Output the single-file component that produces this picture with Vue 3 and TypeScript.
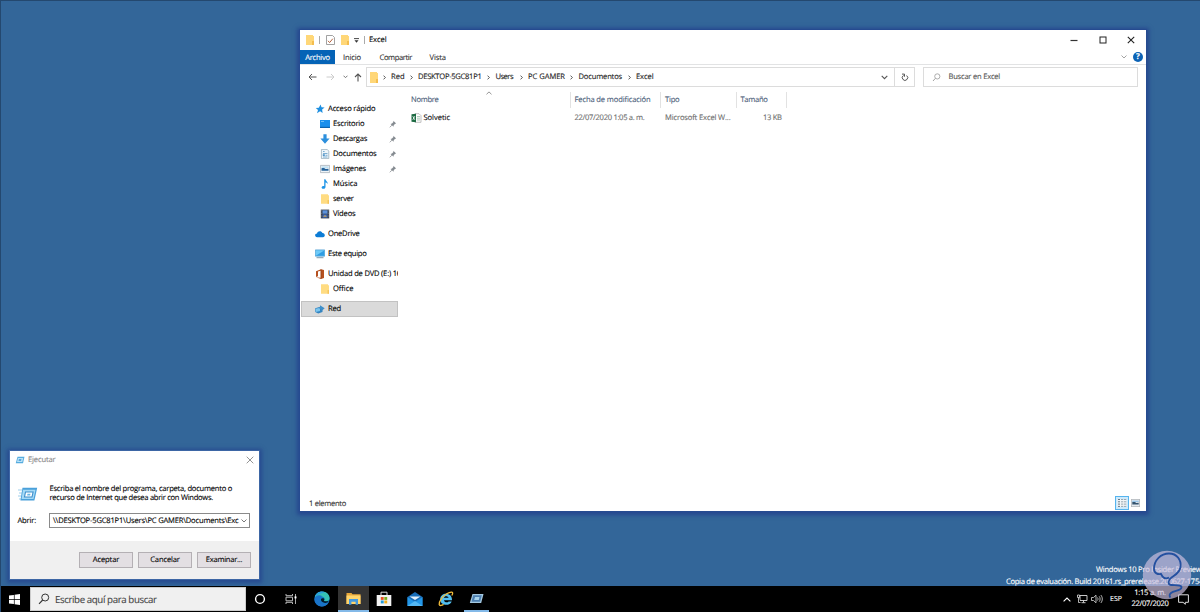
<script setup lang="ts">
import type { Directive } from 'vue'

interface NavItem {
  label: string
  icon: string
  width: number
  child?: boolean
  pinned?: boolean
  gap?: boolean
  selected?: boolean
}

/* Spaces the letters of a label so that it occupies the given width. */
const vFit: Directive<HTMLElement, number> = {
  mounted(el, binding) {
    const n = (el.textContent ?? '').length
    const w = el.getBoundingClientRect().width
    if (n > 0) el.style.letterSpacing = `${(binding.value - w) / n}px`
  },
}

const nav: NavItem[] = [
  { label: 'Acceso rápido', icon: 'star', width: 47.5 },
  { label: 'Escritorio', icon: 'desktop', width: 31.5, child: true, pinned: true },
  { label: 'Descargas', icon: 'down', width: 34, child: true, pinned: true },
  { label: 'Documentos', icon: 'doc', width: 43.5, child: true, pinned: true },
  { label: 'Imágenes', icon: 'image', width: 33, child: true, pinned: true },
  { label: 'Música', icon: 'music', width: 24.5, child: true },
  { label: 'server', icon: 'folder', width: 20.5, child: true },
  { label: 'Vídeos', icon: 'video', width: 22.5, child: true },
  { label: 'OneDrive', icon: 'cloud', width: 31.5, gap: true },
  { label: 'Este equipo', icon: 'pc', width: 38.5, gap: true },
  { label: 'Unidad de DVD (E:) 16', icon: 'office', width: 73, gap: true },
  { label: 'Office', icon: 'folder', width: 20.5, child: true },
  { label: 'Red', icon: 'net', width: 13, gap: true, selected: true },
]

const crumbs = [
  { label: 'Red', width: 13.5, box: 24 },
  { label: 'DESKTOP-5GC81P1', width: 63.5, box: 74.5 },
  { label: 'Users', width: 17.5, box: 29.5 },
  { label: 'PC GAMER', width: 37, box: 47.5 },
  { label: 'Documentos', width: 43.5, box: 54.5 },
  { label: 'Excel', width: 17.5, box: 24 },
]
</script>

<template>
  <div class="desktop">
    <section class="explorer">
      <header class="titlebar">
        <svg class="t-folder" viewBox="0 0 10 10"><path d="M1 0h7v1h1v9H1z" fill="#ffd778" /><path d="M7 6h2v4H7z" fill="#f4bd4f" /></svg>
        <i class="t-sep" />
        <svg class="t-check" viewBox="0 0 9 10"><path d="M.5.5h6l2 2v7h-8z" fill="#fff" stroke="#8a8a8a" stroke-width=".8" /><path d="M2 5.8l1.6 1.8L6.8 3.7" fill="none" stroke="#b5643f" stroke-width="1" /></svg>
        <svg class="t-folder2" viewBox="0 0 10 10"><path d="M1 0h7v1h1v9H1z" fill="#ffd778" /><path d="M7 6h2v4H7z" fill="#f4bd4f" /></svg>
        <svg class="t-drop" viewBox="0 0 5 5"><path d="M0 .6h5" stroke="#333" stroke-width=".9" /><path d="M.5 2.3h4L2.5 4.7z" fill="#333" /></svg>
        <i class="t-sep second" />
        <span v-fit="17.5" class="title">Excel</span>
        <div class="controls">
          <svg width="8" height="10" viewBox="0 0 8 10"><path d="M.5 5.5h7" stroke="#333" stroke-width="1.2" /></svg>
          <svg width="8" height="10" viewBox="0 0 8 10"><rect x="1" y="2" width="6" height="6" fill="none" stroke="#222" /></svg>
          <svg width="8" height="10" viewBox="0 0 8 10"><path d="M.8 1.8l6.4 6.4M7.2 1.8L.8 8.2" stroke="#222" stroke-width="1.1" /></svg>
        </div>
      </header>

      <nav class="ribbon">
        <div class="tab file"><span v-fit="24.5">Archivo</span></div>
        <div class="tab inicio"><span v-fit="18">Inicio</span></div>
        <div class="tab compartir"><span v-fit="32.5">Compartir</span></div>
        <div class="tab vista"><span v-fit="16.5">Vista</span></div>
        <div class="ribbon-right">
          <svg width="6" height="4" viewBox="0 0 6 4"><path d="M.5.5L3 3 5.5.5" fill="none" stroke="#999" stroke-width=".9" /></svg>
          <span class="help">?</span>
        </div>
      </nav>

      <div class="toolbar">
        <div class="arrows">
          <svg class="a-back" viewBox="0 0 9 8"><path d="M8.5 4H1M4 1L1 4l3 3" fill="none" stroke="#555" /></svg>
          <svg class="a-fwd" viewBox="0 0 9 8"><path d="M.5 4H8M5 1l3 3-3 3" fill="none" stroke="#ccc" /></svg>
          <svg class="a-drop" viewBox="0 0 5 4"><path d="M.5.7l2 2 2-2" fill="none" stroke="#777" /></svg>
          <svg class="a-up" viewBox="0 0 8 9"><path d="M4 8.5V1M1 4l3-3 3 3" fill="none" stroke="#555" stroke-width="1.1" /></svg>
        </div>
        <div class="address">
          <svg class="addr-folder" viewBox="0 0 10 11"><path d="M1 0h7v1h1v10H1z" fill="#ffd778" /><path d="M7 7h2v4H7z" fill="#f4bd4f" /></svg>
          <div v-for="c in crumbs" :key="c.label" class="crumb">
            <svg class="chev" viewBox="0 0 3 5"><path d="M.5.6l1.9 1.9L.5 4.4" fill="none" stroke="#444" stroke-width=".9" /></svg>
            <div class="crumb-box" :style="{ width: c.box + 'px' }"><span v-fit="c.width">{{ c.label }}</span></div>
          </div>
          <svg class="addr-drop" viewBox="0 0 7 5"><path d="M.7.9l2.8 2.8L6.3.9" fill="none" stroke="#555" stroke-width="1.1" /></svg>
          <div class="refresh">
            <svg width="8" height="9" viewBox="0 0 8 9"><path d="M5.6 2.5A2.7 2.7 0 1 1 2.5 2.4M1 1.1h2.5v2.6" fill="none" stroke="#555" stroke-width="1" /></svg>
          </div>
        </div>
        <div class="search">
          <svg width="9" height="9" viewBox="0 0 9 9"><circle cx="5.3" cy="3.4" r="2.6" fill="none" stroke="#999" stroke-width=".8" /><path d="M3.4 5.3L1 8" stroke="#999" stroke-width=".9" /></svg>
          <span v-fit="51.5">Buscar en Excel</span>
        </div>
      </div>

      <div class="body">
        <aside class="sidebar">
          <div v-for="item in nav" :key="item.label" class="nav-row" :class="{ child: item.child, gap: item.gap, selected: item.selected }">
            <svg class="nav-icon" viewBox="0 0 10 10">
              <path v-if="item.icon === 'star'" d="M5.6.6l.9 2.700 3.100.2-2.500 2 .5 3.400-2.500-1.600L2 9.200l1-3.300L.8 4l3-.3z" fill="#1e8fe0" />
              <g v-else-if="item.icon === 'desktop'"><path d="M0 1h10v8H0z" fill="#1a8fec" /><path d="M0 7.8h10V9H0z" fill="#0b64b0" /><path d="M1 2h3v1H1z" fill="#70c0f8" /></g>
              <path v-else-if="item.icon === 'down'" d="M3.4.3h3.2v4.3h3L5 9.7.4 4.6h3z" fill="#2c8fdd" />
              <g v-else-if="item.icon === 'doc'"><path d="M1.4.4h5.8l1.6 1.7v7.5H1.4z" fill="#edf5fa" stroke="#8ca5b4" stroke-width=".7" /><path d="M3 2.5h1.6M3 4.5h4.5M5.5 6.3h2M3 8h4.5" stroke="#5e9cc8" stroke-width=".8" /><path d="M2.8 5.3h2v1.6h-2z" fill="#3e88c2" /></g>
              <g v-else-if="item.icon === 'image'"><path d="M.4 1.4h9.2v7.2H.4z" fill="#eef4f8" stroke="#9fa9b1" stroke-width=".7" /><path d="M1.5 4.200l2.200-.4 2 1.300 2.800-.3v1.900h-7z" fill="#26639a" /><path d="M1.5 2.5h7v1.3h-7z" fill="#b4dcf3" /></g>
              <path v-else-if="item.icon === 'music'" d="M4.2.2h1.2c.2 1.8 2.7 2.2 2.3 4.9-.5-1.2-1.4-1.5-2.2-1.6v4.4c0 2.3-3.9 2.5-3.9.6 0-1.4 1.5-1.8 2.6-1.5z" fill="#2196e8" />
              <g v-else-if="item.icon === 'folder'"><path d="M1 .3h7v1h1v8.4H1z" fill="#ffdc82" /><path d="M7.5 6H9v3.7H7.5z" fill="#f5c55d" /></g>
              <g v-else-if="item.icon === 'video'"><path d="M.8.6h8.4v8.8H.8z" fill="#333c4b" /><path d="M2.5 1.3h5v3.4h-5z" fill="#5b91dc" /><path d="M2.5 5.3h5v3.4h-5z" fill="#3b66b7" /><path d="M3 7.7l2-1.7 2 1.7z" fill="#c9a45a" /><path d="M1.7 1v8.4M8.3 1v8.4" stroke="#b9bcc4" stroke-width=".5" stroke-dasharray=".8 .8" /></g>
              <path v-else-if="item.icon === 'cloud'" d="M2.1 8.2C-.6 8-.4 4.6 2 4.6 2.6 1.5 6.5 1.4 7.4 4c2.8-.2 3.3 4 .6 4.2z" fill="#0c7cd5" />
              <g v-else-if="item.icon === 'pc'"><path d="M.3.9h9.4v6.3H.3z" fill="#6dcaf8" stroke="#3d8fc7" stroke-width=".6" /><path d="M.8 6.7L9.2 1.4v5.3z" fill="#2f9de3" /><path d="M1.5 8.2h7v1h-7z" fill="#7c98aa" /></g>
              <g v-else-if="item.icon === 'office'"><path d="M1 2.200L6 .2 9 1v8L6 9.900 1 8.200l4.700.5V1.800l-2.700.8v4.600L1 8z" fill="#b5501f" /><path d="M6 .3v9.500" stroke="#7d3413" stroke-width=".5" /></g>
              <g v-else><path d="M.2 4.300l5-1.500 2.300 1v4.200L3.200 9.500.2 8z" fill="#3484c0" /><path d="M.7 4.700l4.300-1v3.400l-4.300 1z" fill="#79c5ef" /><path d="M5 1.300l4.700 3L6.500 7V5.500L3.500 4l1.500-.7z" fill="#3f8fc9" /></g>
            </svg>
            <span v-fit="item.width" class="nav-label">{{ item.label }}</span>
            <svg v-if="item.pinned" class="pin" viewBox="0 0 8 8"><path d="M4.3.8l2.9 2.8-1 .2-1.5 1.5-.1 1.5L1.5 3.9 3 3.6 4.4 2z" fill="#858b91" /><path d="M3 5.1L.8 7.3" stroke="#858b91" stroke-width=".8" /></svg>
          </div>
        </aside>
        <main class="files">
          <div class="head">
            <div class="col name"><span v-fit="27.5">Nombre</span>
              <svg class="sort" viewBox="0 0 6 4"><path d="M.5 3.3L3 .9l2.5 2.4" fill="none" stroke="#777" stroke-width=".8" /></svg>
            </div>
            <div class="col date"><span v-fit="76">Fecha de modificación</span></div>
            <div class="col type"><span v-fit="14.5">Tipo</span></div>
            <div class="col size"><span v-fit="27">Tamaño</span></div>
          </div>
          <div class="file-row">
            <div class="cell name">
              <svg width="11" height="10" viewBox="0 0 11 10"><path d="M4 .7h4l2 2v6.600H4z" fill="#fff" stroke="#999" stroke-width=".6" /><path d="M6 3.500h3M6 5.200h3M6 7h3" stroke="#8fb8a0" stroke-width=".7" /><path d="M.5 1.300L5 .7v8.600l-4.500-.6z" fill="#1d6b43" /><path d="M1.800 3.200l2 3.600M3.800 3.200l-2 3.600" stroke="#fff" stroke-width=".8" /></svg>
              <span v-fit="26.5">Solvetic</span>
            </div>
            <div class="cell date"><span v-fit="70">22/07/2020 1:05 a. m.</span></div>
            <div class="cell type"><span v-fit="65.5">Microsoft Excel W...</span></div>
            <div class="cell size"><span v-fit="18.5">13 KB</span></div>
          </div>
        </main>
      </div>

      <footer class="status">
        <span v-fit="37">1 elemento</span>
        <div class="views">
          <svg width="14" height="14" viewBox="0 0 14 14"><rect x=".5" y=".5" width="13" height="13" fill="#cdeafc" stroke="#56b4ee" /><path d="M2.500 3h9v8h-9z" fill="#f2f5f7" /><path d="M3 3.500h2M3 5.800h2M3 8.100h2M3 10.400h2" stroke="#687987" stroke-width="1" /><path d="M6 3.500h2.300M6 5.800h2.300M6 8.100h2.300M6 10.400h2.300M9 3.500h2.300M9 5.800h2.300M9 8.100h2.300M9 10.400h2.300" stroke="#7f929f" stroke-width=".8" /></svg>
          <svg width="9" height="8" viewBox="0 0 9 8"><rect x=".4" y=".4" width="8.2" height="7.2" fill="#e4eaf0" stroke="#b3b8bd" stroke-width=".8" /><path d="M1.3 3l2.2-.3L5.4 4l2.3-.3v1.8H1.3z" fill="#34546f" /><path d="M1.3 1.6h6.4V3H1.3z" fill="#97c5e9" /></svg>
        </div>
      </footer>
    </section>

    <section class="run">
      <header class="run-title">
        <svg width="10" height="8" viewBox="0 0 20 16"><path d="M5 1.5h14l-3 13H1.5z" fill="#56acdf" /><path d="M6 4h10.5l-2 8H4z" fill="#b9e2f8" /><path d="M8 6h5l-1 4H7z" fill="#5aa7dd" /></svg>
        <span v-fit="27.5">Ejecutar</span>
        <svg class="run-close" viewBox="0 0 8 8"><path d="M.7.7l6.6 6.6M7.3.7L.7 7.3" stroke="#888" stroke-width=".9" /></svg>
      </header>
      <div class="run-info">
        <svg width="20" height="15" viewBox="0 0 20 15"><path d="M4.500.8h14.700l-2.800 12.800H2.400z" fill="#4aa0da" /><path d="M5 2.800h12.500l-2 9.200H3.600z" fill="#a5daf7" /><path d="M7.500 5h7.600l-1.100 5H6.500z" fill="#fff" stroke="#3c8ecb" stroke-width="1.1" /><path d="M9.500 6.700h3l-.4 1.800h-3z" fill="#67b5e5" /><path d="M0 3h4M1 6h3M0 9h3M1 12h2" stroke="#73b9e2" stroke-width=".7" /></svg>
        <div class="run-text">
          <div><span v-fit="182.5">Escriba el nombre del programa, carpeta, documento o</span></div>
          <div><span v-fit="163.5">recurso de Internet que desea abrir con Windows.</span></div>
        </div>
      </div>
      <div class="run-open">
        <label><span v-fit="18.5">Abrir:</span></label>
        <div class="combo">
          <span v-fit="185.5">\\DESKTOP-5GC81P1\Users\PC GAMER\Documents\Exc</span>
          <svg viewBox="0 0 6 4"><path d="M.5.5L3 3 5.500.5" fill="none" stroke="#555" stroke-width=".8" /></svg>
        </div>
      </div>
      <footer class="run-buttons">
        <button><span v-fit="26.5">Aceptar</span></button>
        <button><span v-fit="29.5">Cancelar</span></button>
        <button><span v-fit="36.5">Examinar...</span></button>
      </footer>
    </section>

    <div class="build">
      <div><span v-fit="105.5">Windows 10 Pro Insider Preview</span></div>
      <div class="b2"><span v-fit="197">Copia de evaluación. Build 20161.rs_prerelease.200627-1754</span></div>
    </div>

    <div class="taskbar">
      <div class="start"><svg width="11" height="11" viewBox="0 0 11 11"><path d="M0 1.6L4.9.9v4.3H0zM5.6.8L11 0v5.2H5.6zM0 5.9h4.9v4.2L0 9.4zM5.6 5.9H11V11l-5.4-.8z" fill="#fff" /></svg></div>
      <div class="task-search">
        <svg width="12" height="12" viewBox="0 0 12 12"><circle cx="7.2" cy="4.5" r="3.5" fill="none" stroke="#333" stroke-width="1" /><path d="M4.7 7L1 10.8" stroke="#333" stroke-width="1.1" /></svg>
        <span v-fit="101.5">Escribe aquí para buscar</span>
      </div>
      <div class="task"><svg width="12" height="12" viewBox="0 0 12 12"><circle cx="6" cy="6" r="4.4" fill="none" stroke="#fff" stroke-width="1.4" /></svg></div>
      <div class="task"><svg width="12" height="12" viewBox="0 0 12 12"><path d="M1 1v1.700h6.500V1M1 11V9.300h6.500V11M1 4.200h6.500v3.600H1z" fill="none" stroke="#bbb" stroke-width="1" /><path d="M10.500 1v10" stroke="#aaa" stroke-width="1" /><path d="M9.500 3.400h2v2h-2z" fill="#fff" /></svg></div>
      <div class="task"><svg width="16" height="16" viewBox="0 0 16 16"><circle cx="8" cy="8" r="7.600" fill="#1579c9" /><path d="M.7 6.500C1.600-.8 15.100-1.700 15.600 7c0 3-3.700 3.800-5.700 2.700 2-2.400-.4-4.600-3-4.100-3.600.1-5.500 1-6.200.9z" fill="#35c1b5" /><path d="M.7 6.500C1.600 1 7-.8 11 1.200 8 2 4 3 .7 6.500z" fill="#2aa0dc" /><path d="M.5 8c.4-3.600 5.100-5 8-2.700-3.500.5-3.700 4.400-1.200 6.200 2.300 1.700 5.200 1.200 7 .3-3 4.800-9.500 4.800-12.200 1C.8 11.300.4 9.700.5 8z" fill="#1a73c8" /><path d="M7 8.200c.3-1 2.200-1.400 3-.7.600.8.400 1.500-.2 2.200 1 .9 3.300.8 4.900 0-.5 2-3.300 2.600-5.200 1.900C7.800 11 6.700 9.700 7 8.200z" fill="#031b2a" /></svg></div>
      <div class="task active"><svg width="15" height="13" viewBox="0 0 15 13"><path d="M.5 1h5l1 1.300h8V12H.5z" fill="#e9a93b" /><path d="M.5 3.500h14v8.500H.5z" fill="#ffd56c" /><path d="M3 7h9v5.700H9.600V9.700H5.400v3H3z" fill="#4499df" /></svg></div>
      <div class="task"><svg width="16" height="16" viewBox="0 0 16 16"><path d="M5 4V1.200h6V4" fill="none" stroke="#ddd" /><path d="M.7 4h14.600v11H.7z" fill="#f3f3f3" /><path d="M4.800 6h2.900v2.900H4.800z" fill="#e65225" /><path d="M8.300 6h2.900v2.900H8.300z" fill="#7aaf20" /><path d="M4.800 9.500h2.900v2.900H4.800z" fill="#239ada" /><path d="M8.300 9.500h2.900v2.900H8.300z" fill="#f2ad16" /></svg></div>
      <div class="task"><svg width="16" height="16" viewBox="0 0 16 16"><path d="M.5 6L8 1l7.500 5v9H.5z" fill="#176cb7" /><path d="M2.500 5.500h11L8 9z" fill="#e4f1fb" /><path d="M.5 6L8 11l7.500-5v9H.5z" fill="#2397e8" /><path d="M.5 15L8 10l7.500 5z" fill="#54b9f5" /></svg></div>
      <div class="task"><svg width="16" height="16" viewBox="0 0 16 16"><path d="M14 9.300H6c.4 2.400 3.600 2.600 4.600 1.100h3.100c-1.900 5.300-11.500 4.500-11.500-2.200C2.200.8 14.500.6 14 9.300zM6 6.800h4.500c-.4-2-4.100-2.100-4.500 0z" fill="#52bff0" /><path d="M13.800 4.500C16.300.3 13 .2 8.700 2.800 4.300 5.500.7 10.800 1.200 13.600c.4 1.600 2.700.8 4.400-.2" fill="none" stroke="#f1bc3b" stroke-width="1.300" /></svg></div>
      <div class="task open"><svg width="15" height="12" viewBox="0 0 15 12"><path d="M3.500 1h11l-2.300 9H.8z" fill="#a4c8e0" /><path d="M4.200 2.200h8.600l-1.700 6.600H2.500z" fill="#4d7fb0" /><path d="M6 4h4.500l-.7 3H5.200z" fill="#a8d3ec" /></svg></div>
      <div class="tray">
        <svg class="up" viewBox="0 0 8 5"><path d="M.6 4.300L4 1l3.400 3.300" fill="none" stroke="#fff" stroke-width="1.100" /></svg>
        <svg class="lan" viewBox="0 0 11 10"><path d="M3 1.500h7v5H3zM6.500 6.500v2M4.500 8.700h4" fill="none" stroke="#ddd" stroke-width=".9" /><path d="M.5 1h2v2.500h-2zM1.500 3.500v5h2" fill="#000" stroke="#ddd" stroke-width=".8" /></svg>
        <svg class="vol" viewBox="0 0 12 10"><path d="M.5 3.500h2L5 1.200v7.600L2.500 6.500h-2z" fill="none" stroke="#ddd" stroke-width=".8" /><path d="M6.500 3.500c.7.900.7 2.100 0 3M8.200 2.300c1.200 1.600 1.200 3.800 0 5.400M9.800 1c2 2.300 2 5.700 0 8" fill="none" stroke="#ddd" stroke-width=".8" /></svg>
        <span v-fit="12" class="lang">ESP</span>
        <div class="clock"><div><span v-fit="31.500">1:15 a. m.</span></div><div><span v-fit="37">22/07/2020</span></div></div>
        <svg class="note" viewBox="0 0 11 11"><path d="M.6.800h9.800v7.500H7.300v2L5 8.300H.6z" fill="none" stroke="#ddd" stroke-width="1" /></svg>
      </div>
    </div>

    <svg class="logo" viewBox="0 0 52 52">
      <circle cx="26" cy="26" r="24.200" fill="#c9bddd" fill-opacity=".7" />
      <path d="M28 28.500c-4 2.500-6.500-.3-8-3.500-3 .5-7-.5-7-5C13 11 20 4.500 28 4.500c8 0 12.500 6.500 11.500 13.500C38.700 24 34 26 30.500 28.500c-3.500 2.500-4 7-.5 7.500 4 .5 11-.5 10.500 2.500-.5 3.500-7.500 3-10.500 5.500-1.500 1.300-2 3-.5 4.500" fill="none" stroke="#2450a0" stroke-width="1.800" />
    </svg>
  </div>
</template>

<style>
html,
body {
  margin: 0;
  overflow: hidden;
}
</style>

<style scoped>
* { box-sizing: border-box; }
svg { display: block; flex: none; }
span { display: inline-block; white-space: pre; -webkit-text-stroke: 0.12px currentColor; }
.desktop {
  position: relative;
  width: 1200px;
  height: 612px;
  overflow: hidden;
  background: #336699;
  border-left: 1px solid #24486f;
  border-top: 1px solid #24486f;
  font-family: "Open Sans", "Noto Sans", sans-serif;
  font-size: 7.6px;
  line-height: 10px;
  color: #000;
  text-rendering: geometricPrecision;
}
.explorer {
  position: absolute;
  left: 298px;
  top: 28px;
  width: 848px;
  height: 483px;
  display: flex;
  flex-direction: column;
  background: #fff;
  border: 1px solid #264b90;
  box-shadow: 0 1px 4px 2px rgba(34, 62, 140, 0.75);
}
.titlebar { display: flex; align-items: center; height: 20px; padding-left: 5px; flex: none; }
.t-folder, .t-folder2 { width: 10px; height: 10px; }
.t-sep { width: 1px; height: 8px; background: #aaa; margin-left: 4px; }
.t-check { width: 9px; height: 10px; margin-left: 6px; }
.t-folder2 { margin-left: 5px; }
.t-drop { width: 5px; height: 5px; margin-left: 4px; }
.t-sep.second { margin-left: 5px; }
.title { margin-left: 4px; }
.controls { display: flex; gap: 20.500px; margin-left: auto; padding-right: 11px; }
.ribbon { display: flex; height: 15px; border-bottom: 1px solid #e2e3e4; flex: none; }
.tab { display: flex; align-items: center; height: 14px; padding-top: 1px; color: #333; }
.tab.file { width: 35px; justify-content: center; background: #0563b6; color: #fff; }
.tab.inicio { margin-left: 8px; width: 36.500px; }
.tab.compartir { width: 50px; }
.ribbon-right { display: flex; align-items: center; gap: 6px; margin-left: auto; padding-right: 3px; }
.help { width: 10px; height: 10px; border-radius: 50%; background: #0b62b5; color: #fff; font-weight: 700; font-size: 8px; line-height: 10px; text-align: center; }
.toolbar { display: flex; height: 24px; padding-top: 2px; flex: none; }
.arrows { display: flex; align-items: center; width: 66px; height: 20px; padding-left: 7.500px; }
.a-back { width: 9px; height: 8px; }
.a-fwd { width: 9px; height: 8px; margin-left: 9px; }
.a-drop { width: 5px; height: 4px; margin-left: 8px; }
.a-up { width: 8px; height: 9px; margin-left: 6.500px; }
.address { display: flex; align-items: center; width: 549px; height: 20px; border: 1px solid #dcdcdc; color: #222; }
.addr-folder { width: 10px; height: 11px; margin: 0 3.500px 0 2px; }
.crumb { display: flex; align-items: center; }
.chev { width: 3px; height: 5px; }
.crumb-box { padding-left: 5.500px; }
.addr-drop { width: 7px; height: 5px; margin-left: auto; margin-right: 6px; }
.refresh { display: flex; align-items: center; justify-content: center; width: 20px; height: 18px; border-left: 1px solid #dcdcdc; }
.search { display: flex; align-items: center; width: 215px; height: 20px; margin-left: 8px; padding-left: 8px; border: 1px solid #dcdcdc; color: #555; }
.search span { margin-left: 7.500px; }
.body { display: flex; flex: 1; }
.sidebar { width: 98px; padding-top: 12px; }
.nav-row { display: flex; align-items: center; height: 15px; margin-left: 1px; padding-left: 14px; width: 97px; overflow: hidden; }
.nav-row.child { padding-left: 19px; }
.nav-row.gap { margin-top: 5px; }
.nav-row.selected { background: #dadada; height: 16px; outline: 1px solid #c2c2c2; outline-offset: -1px; }
.nav-icon { width: 10px; height: 10px; }
.nav-label { margin-left: 3px; flex: none; }
.pin { width: 8px; height: 8px; margin-left: auto; margin-right: 1.500px; }
.files { flex: 1; padding-left: 13px; padding-top: 3px; }
.head { display: flex; height: 16px; color: #4c607a; }
.col { display: flex; align-items: center; height: 16px; border-right: 1px solid #e2e2e2; }
.col.name { position: relative; width: 160px; }
.sort { position: absolute; left: 75px; top: -1px; width: 6px; height: 4px; }
.col.date { width: 90px; padding-left: 3.500px; }
.col.type { width: 76px; padding-left: 4px; }
.col.size { width: 50px; padding-left: 3.500px; }
.file-row { display: flex; height: 20px; color: #6d6d6d; }
.cell { display: flex; align-items: center; height: 19px; }
.cell.name { width: 160px; color: #111; }
.cell.name span { margin-left: 1.500px; }
.cell.date { width: 90px; padding-left: 3.500px; }
.cell.type { width: 76px; padding-left: 4px; }
.cell.size { width: 44.500px; justify-content: flex-end; }
.status { display: flex; align-items: center; justify-content: space-between; height: 16px; padding: 0 6px 0 9px; color: #333; flex: none; }
.status > span { padding-top: 1.500px; }
.views { display: flex; align-items: center; gap: 2px; }
.run {
  position: absolute;
  left: 8px;
  top: 449px;
  width: 251px;
  height: 130px;
  background: #fff;
  border: 1px solid #3d66a5;
  box-shadow: 0 1px 4px 2px rgba(34, 62, 140, 0.7);
}
.run-title { display: flex; align-items: center; height: 18px; padding: 0 5px; color: #888; }
.run-title span { margin-left: 3px; }
.run-close { width: 8px; height: 8px; margin-left: auto; }
.run-info { display: flex; align-items: center; height: 37px; padding: 13.500px 0 0 7.500px; }
.run-text { margin-left: 12px; line-height: 9.500px; }
.run-text div { height: 9.500px; }
.run-open { display: flex; align-items: center; height: 15px; margin-top: 7px; padding-left: 7.500px; }
.run-open label { width: 31.500px; }
.combo { display: flex; align-items: center; width: 201px; height: 15px; border: 1px solid #8a8a8a; padding-left: 3px; }
.combo svg { width: 6px; height: 4px; margin-left: auto; margin-right: 2px; }
.run-buttons { display: flex; gap: 5px; height: 38px; margin-top: 13px; padding: 11px 0 0 69px; background: #f0f0f0; }
button { width: 54px; height: 16px; padding: 0; border: 1px solid #b4b0b4; background: #e3dfe3; font: inherit; line-height: 10px; color: #000; text-rendering: inherit; }
.build { position: absolute; left: 1005px; top: 564px; width: 195px; color: #fff; line-height: 10px; }
.build div { height: 11.500px; }
.build div:first-child { padding-left: 90px; }
.taskbar { position: absolute; left: -1px; top: 585px; width: 1200px; height: 26px; display: flex; background: #000; color: #fff; }
.start { display: flex; align-items: center; justify-content: center; width: 30px; padding-right: 1px; }
.task-search { display: flex; align-items: center; width: 215.500px; height: 24px; margin: 1px -0.500px 1px 0; padding-left: 7px; background: #f0f0f0; border: 1px solid #ccc; color: #444; font-size: 9.700px; line-height: 13px; }
.task-search span { margin-left: 5px; }
.task { display: flex; align-items: center; justify-content: center; width: 30.900px; height: 26px; }
.task.active { background: #343434; border-bottom: 2px solid #83b9e8; }
.task.open { position: relative; }
.task.open::after { content: ""; position: absolute; left: 3px; bottom: 0; width: 25px; height: 2px; background: #83b9e8; }
.tray { display: flex; align-items: center; margin-left: auto; padding-right: 11px; }
.up { width: 8px; height: 5px; }
.lan { width: 11px; height: 10px; margin-left: 6px; }
.vol { width: 12px; height: 10px; margin-left: 3px; }
.lang { margin-left: 7.500px; font-size: 7px; padding-top: 1px; }
.clock { width: 38px; margin-left: 9px; text-align: center; }
.clock div { height: 11px; }
.note { width: 11px; height: 11px; margin-left: 9px; }
.logo { position: absolute; left: 1140px; top: 548px; width: 52px; height: 52px; }
</style>
